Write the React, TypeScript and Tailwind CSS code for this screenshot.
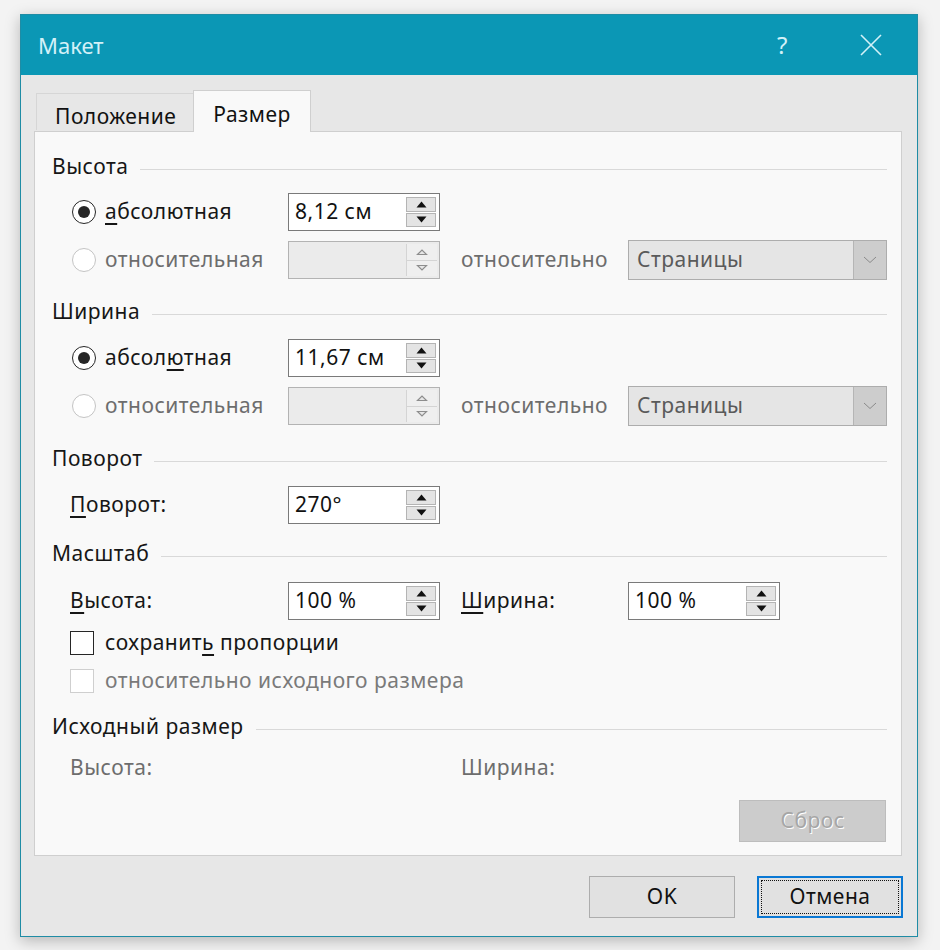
import React from "react";

function U({ children }: { children: React.ReactNode }) {
  return <span className="underline underline-offset-[4px] decoration-[1.5px]">{children}</span>;
}

function Radio({ checked, disabled }: { checked?: boolean; disabled?: boolean }) {
  return (
    <div
      className={`w-[24px] h-[24px] rounded-full border-[1.5px] flex items-center justify-center bg-white ${
        disabled ? "border-[#c4c4c4]" : "border-[#262626]"
      }`}
    >
      {checked && <div className="w-[12px] h-[12px] rounded-full bg-[#262626]" />}
    </div>
  );
}

function Checkbox({ disabled }: { disabled?: boolean }) {
  return (
    <div
      className={`w-[24px] h-[24px] border-[1.5px] bg-white ${disabled ? "border-[#cfcfcf]" : "border-[#262626]"}`}
    />
  );
}

function Spinner({ value, disabled }: { value?: string; disabled?: boolean }) {
  return (
    <div
      className={`w-[152px] h-[38px] border flex ${
        disabled ? "border-[#b3b3b3] bg-[#ebebeb]" : "border-[#7a7a7a] bg-white"
      }`}
    >
      <div className="flex-1 pl-[6px] flex items-center text-[21px] text-[#111]">{value}</div>
      {disabled ? (
        <div className="w-[31px] my-[2px] mr-[2px] flex flex-col border-l border-[#d4d4d4] bg-[#efefef]">
          <div className="flex-1 flex items-center justify-center border-b border-[#d4d4d4]">
            <svg width="12" height="8" viewBox="0 0 12 8">
              <path d="M1.5 6.5 L6 2 L10.5 6.5 Z" fill="#e6e6e6" stroke="#8d8d8d" strokeWidth="1.2" />
            </svg>
          </div>
          <div className="flex-1 flex items-center justify-center">
            <svg width="12" height="8" viewBox="0 0 12 8">
              <path d="M1.5 1.5 L6 6 L10.5 1.5 Z" fill="#e6e6e6" stroke="#8d8d8d" strokeWidth="1.2" />
            </svg>
          </div>
        </div>
      ) : (
        <div className="w-[30px] my-[3px] mr-[3px] flex flex-col gap-[1px]">
          <div className="flex-1 flex items-center justify-center border border-[#b4b4b4] bg-[#e4e4e4]">
            <svg width="11" height="7" viewBox="0 0 11 7">
              <path d="M0.5 6.5 L5.5 0.5 L10.5 6.5 Z" fill="#111" />
            </svg>
          </div>
          <div className="flex-1 flex items-center justify-center border border-[#b4b4b4] bg-[#e4e4e4]">
            <svg width="11" height="7" viewBox="0 0 11 7">
              <path d="M0.5 0.5 L5.5 6.5 L10.5 0.5 Z" fill="#111" />
            </svg>
          </div>
        </div>
      )}
    </div>
  );
}

function Combo() {
  return (
    <div className="w-[259px] h-[40px] border border-[#adadad] bg-[#e5e5e5] flex">
      <div className="flex-1 pl-[8px] flex items-center text-[21px] text-[#5a5a5a]">Страницы</div>
      <div className="w-[33px] bg-[#cdcdcd] border-l border-[#b5b5b5] flex items-center justify-center">
        <svg width="14" height="8" viewBox="0 0 14 8">
          <path d="M1 1 L7 6.5 L13 1" fill="none" stroke="#8a8a8a" strokeWidth="1" />
        </svg>
      </div>
    </div>
  );
}

function Heading({ title, className }: { title: string; className: string }) {
  return (
    <div className={`flex items-center h-[30px] pl-[17px] pr-[14px] ${className}`}>
      <span className="text-[21px] text-[#161616]">{title}</span>
      <div className="flex-1 h-px bg-[#d9d9d9] ml-[12px] mt-[5px]" />
    </div>
  );
}

function Row({ children, className }: { children: React.ReactNode; className: string }) {
  return <div className={`flex items-center h-[38px] pl-[37px] ${className}`}>{children}</div>;
}

export default function App() {
  return (
    <div className="w-[940px] h-[950px] bg-[#f3f3f3] pt-[14px] pl-[20px] font-['Noto_Sans',sans-serif] tracking-[0.5px] text-[#161616]">
      <div className="w-[898px] h-[923px] border border-[#1f8ca5] bg-[#e7e7e7] flex flex-col shadow-[0_4px_14px_rgba(0,0,0,0.25)]">
        {/* Title bar */}
        <div className="h-[60px] bg-[#0b97b5] flex items-center pl-[17px] pr-[35px]">
          <span className="text-[22px] text-[#d3f1f8] flex-1 tracking-normal">Макет</span>
          <span className="text-[24px] text-[#d3f1f8] mr-[72px]">?</span>
          <svg width="22" height="22" viewBox="0 0 22 22">
            <path d="M1 1 L21 21 M21 1 L1 21" stroke="#d3f1f8" strokeWidth="1.6" />
          </svg>
        </div>

        {/* Tabs */}
        <div className="flex items-end h-[56px] pl-[15px] relative z-10">
          <div className="h-[37px] w-[157px] pl-[18px] flex items-center pt-[9px] border-t border-l border-[#d6d6d6] text-[21px] text-[#111] mb-px">
            Положение
          </div>
          <div className="h-[42px] w-[118px] flex items-center justify-center pt-[6px] bg-[#f9f9f9] border-t border-l border-r border-[#cfcfcf] text-[21px] text-[#111] -mb-px">
            Размер
          </div>
        </div>

        {/* Panel */}
        <div className="mx-[13px] mr-[15px] h-[725px] border border-[#cfcfcf] bg-[#f9f9f9] flex flex-col">
          <Heading title="Высота" className="mt-[20px]" />
          <Row className="mt-[11px]">
            <div className="w-[216px] flex items-center gap-[9px]">
              <Radio checked />
              <span className="text-[21px]">
                <U>а</U>бсолютная
              </span>
            </div>
            <Spinner value="8,12 см" />
          </Row>
          <Row className="mt-[10px]">
            <div className="w-[216px] flex items-center gap-[9px]">
              <Radio disabled />
              <span className="text-[21px] text-[#6d6d6d]">относительная</span>
            </div>
            <Spinner disabled />
            <div className="w-[188px] pl-[21px] text-[21px] text-[#6d6d6d]">относительно</div>
            <Combo />
          </Row>

          <Heading title="Ширина" className="mt-[18px]" />
          <Row className="mt-[12px]">
            <div className="w-[216px] flex items-center gap-[9px]">
              <Radio checked />
              <span className="text-[21px]">
                абсол<U>ю</U>тная
              </span>
            </div>
            <Spinner value="11,67 см" />
          </Row>
          <Row className="mt-[10px]">
            <div className="w-[216px] flex items-center gap-[9px]">
              <Radio disabled />
              <span className="text-[21px] text-[#6d6d6d]">относительная</span>
            </div>
            <Spinner disabled />
            <div className="w-[188px] pl-[21px] text-[21px] text-[#6d6d6d]">относительно</div>
            <Combo />
          </Row>

          <Heading title="Поворот" className="mt-[19px]" />
          <Row className="mt-[12px]">
            <div className="w-[216px] text-[21px] -ml-[2px] mr-[2px]">
              <U>П</U>оворот:
            </div>
            <Spinner value="270°" />
          </Row>

          <Heading title="Масштаб" className="mt-[15px]" />
          <Row className="mt-[13px]">
            <div className="w-[216px] text-[21px] -ml-[2px] mr-[2px]">
              <U>В</U>ысота:
            </div>
            <Spinner value="100 %" />
            <div className="w-[188px] pl-[21px] text-[21px]">
              <U>Ш</U>ирина:
            </div>
            <Spinner value="100 %" />
          </Row>
          <div className="flex items-center h-[28px] pl-[35px] gap-[11px] mt-[9px]">
            <Checkbox />
            <span className="text-[21px]">
              сохранит<U>ь</U> пропорции
            </span>
          </div>
          <div className="flex items-center h-[28px] pl-[35px] gap-[11px] mt-[10px]">
            <Checkbox disabled />
            <span className="text-[21px] text-[#7a7a7a]">относительно исходного размера</span>
          </div>

          <Heading title="Исходный размер" className="mt-[17px]" />
          <div className="flex items-center h-[30px] pl-[35px] mt-[11px] text-[21px] text-[#6d6d6d]">
            <div className="w-[391px]">Высота:</div>
            <div>Ширина:</div>
          </div>
          <div className="flex justify-end pr-[15px] mt-[17px]">
            <div className="w-[147px] h-[42px] bg-[#cccccc] border border-[#bdbdbd] flex items-center justify-center text-[21px] text-[#a6a6a6] [text-shadow:1px_1px_0_#ffffff]">
              Сброс
            </div>
          </div>
        </div>

        {/* Footer */}
        <div className="flex justify-end gap-[22px] pr-[14px] pt-[20px]">
          <div className="w-[146px] h-[42px] bg-[#e1e1e1] border border-[#adadad] flex items-center justify-center text-[21px] text-[#111]">
            OK
          </div>
          <div className="w-[146px] h-[42px] bg-[#e1e1e1] border-2 border-[#0a78d4] p-[2px]">
            <div className="w-full h-full border border-dotted border-[#111] flex items-center justify-center text-[21px] text-[#111]">
              Отмена
            </div>
          </div>
        </div>
      </div>
    </div>
  );
}
